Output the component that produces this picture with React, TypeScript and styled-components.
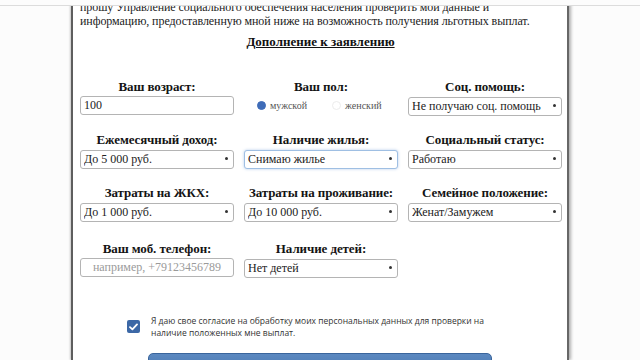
import React from 'react';
import styled, { createGlobalStyle } from 'styled-components';

const GlobalStyle = createGlobalStyle`
  html, body {
    margin: 0;
    padding: 0;
    background: #fcfcfc;
    overflow: hidden;
  }
  body {
    font-family: "Liberation Serif", serif;
  }
`;

const Screen = styled.div`
  position: relative;
  height: 360px;
  overflow: hidden;
`;

const TopBar = styled.div`
  position: absolute;
  top: 0;
  left: 0;
  right: 0;
  height: 5px;
  background: #fcfcfc;
  border-bottom: 1px solid #dcdcdc;
  z-index: 2;
`;

const Sheet = styled.div`
  box-sizing: border-box;
  width: 498px;
  height: 360px;
  margin: 0 auto;
  padding: 0 6px 0 7px;
  background: #fff;
  border-left: 2px solid #5e5e5e;
  border-right: 2px solid #676767;
  box-shadow: 2px 0 3px rgba(0, 0, 0, 0.3), -1px 0 2px rgba(0, 0, 0, 0.2);
  font-family: "Liberation Serif", serif;
`;

const Intro = styled.p`
  margin: 0;
  font-size: 12px;
  line-height: 14px;
  letter-spacing: -0.08px;
  white-space: nowrap;
  color: #222;
`;

const Heading = styled.h2`
  margin: 6px 0 0;
  text-align: center;
  font-size: 13px;
  line-height: 15px;
  font-weight: bold;
  text-decoration: underline;
  color: #111;
`;

const FormGrid = styled.div`
  display: grid;
  grid-template-columns: repeat(3, 154px);
  column-gap: 10px;
  row-gap: 17px;
  margin-top: 30px;
`;

const Field = styled.div<{ $late?: boolean }>`
  display: flex;
  flex-direction: column;
  gap: 2px;
  margin-top: ${({ $late }) => ($late ? '3px' : '0')};
`;

const Label = styled.div`
  text-align: center;
  font-size: 13px;
  line-height: 15px;
  font-weight: bold;
  letter-spacing: -0.1px;
  color: #141414;
`;

const TextInput = styled.input<{ $center?: boolean }>`
  box-sizing: border-box;
  width: 100%;
  height: 19px;
  padding: 0 3px;
  border: 1px solid #b4b4b4;
  border-radius: 3px;
  background: #fff;
  font-family: "Liberation Serif", serif;
  font-size: 12px;
  color: #222;
  text-align: ${({ $center }) => ($center ? 'center' : 'left')};
  outline: none;
  &::placeholder {
    color: #9a9a9a;
  }
`;

const SelectWrap = styled.div`
  position: relative;
  height: 19px;
  &::after {
    content: '';
    position: absolute;
    right: 6px;
    top: 8px;
    width: 3px;
    height: 3px;
    border-radius: 50%;
    background: #333;
    pointer-events: none;
  }
`;

const Select = styled.select<{ $focused?: boolean }>`
  appearance: none;
  box-sizing: border-box;
  width: 100%;
  height: 19px;
  padding: 0 14px 0 3px;
  border: 1px solid ${({ $focused }) => ($focused ? '#9fbfe3' : '#b4b4b4')};
  border-radius: 3px;
  background: #fff;
  box-shadow: ${({ $focused }) =>
    $focused ? '0 0 3px rgba(90, 140, 210, 0.45)' : 'none'};
  font-family: "Liberation Serif", serif;
  font-size: 12px;
  color: #222;
  outline: none;
`;

const RadioRow = styled.div`
  display: flex;
  align-items: center;
  height: 19px;
  padding-left: 13px;
  gap: 25px;
`;

const RadioItem = styled.label`
  display: flex;
  align-items: center;
  gap: 4px;
  font-size: 10px;
  color: #555;
`;

const RadioDot = styled.span<{ $on?: boolean }>`
  box-sizing: border-box;
  width: 9px;
  height: 9px;
  border-radius: 50%;
  background: ${({ $on }) => ($on ? '#3f6cb8' : '#fff')};
  border: 1px solid ${({ $on }) => ($on ? '#3f6cb8' : '#ececec')};
`;

const Consent = styled.div`
  display: flex;
  align-items: flex-start;
  gap: 11px;
  margin-top: 38px;
  padding-left: 47px;
`;

const CheckBox = styled.span`
  flex: none;
  display: flex;
  align-items: center;
  justify-content: center;
  width: 13px;
  height: 13px;
  margin-top: 5px;
  border-radius: 2px;
  background: #3c68a6;
`;

const ConsentText = styled.div`
  width: 340px;
  font-family: "Open Sans", sans-serif;
  font-size: 8.5px;
  line-height: 12px;
  color: #333;
`;

const SubmitButton = styled.button`
  display: block;
  box-sizing: border-box;
  width: 344px;
  height: 32px;
  margin: 14px 0 0 68px;
  border: 1px solid #3a659c;
  border-radius: 5px;
  background: linear-gradient(#5b88c0, #3f6fa8);
`;

const selects = {
  income: ['До 5 000 руб.', 'До 10 000 руб.', 'До 20 000 руб.'],
};

export default function App() {
  return (
    <Screen>
      <GlobalStyle />
      <TopBar />
      <Sheet>
        <Intro>
          прошу Управление социального обеспечения населения проверить мои данные и
          <br />
          информацию, предоставленную мной ниже на возможность получения льготных выплат.
        </Intro>
        <Heading>Дополнение к заявлению</Heading>
        <FormGrid>
          <Field>
            <Label>Ваш возраст:</Label>
            <TextInput defaultValue="100" />
          </Field>
          <Field>
            <Label>Ваш пол:</Label>
            <RadioRow>
              <RadioItem>
                <RadioDot $on />
                мужской
              </RadioItem>
              <RadioItem>
                <RadioDot />
                женский
              </RadioItem>
            </RadioRow>
          </Field>
          <Field>
            <Label>Соц. помощь:</Label>
            <SelectWrap>
              <Select defaultValue="Не получаю соц. помощь">
                <option>Не получаю соц. помощь</option>
                <option>Получаю соц. помощь</option>
              </Select>
            </SelectWrap>
          </Field>

          <Field>
            <Label>Ежемесячный доход:</Label>
            <SelectWrap>
              <Select defaultValue={selects.income[0]}>
                {selects.income.map((o) => (
                  <option key={o}>{o}</option>
                ))}
              </Select>
            </SelectWrap>
          </Field>
          <Field>
            <Label>Наличие жилья:</Label>
            <SelectWrap>
              <Select $focused defaultValue="Снимаю жилье">
                <option>Снимаю жилье</option>
                <option>Собственное жилье</option>
              </Select>
            </SelectWrap>
          </Field>
          <Field>
            <Label>Социальный статус:</Label>
            <SelectWrap>
              <Select defaultValue="Работаю">
                <option>Работаю</option>
                <option>Не работаю</option>
              </Select>
            </SelectWrap>
          </Field>

          <Field>
            <Label>Затраты на ЖКХ:</Label>
            <SelectWrap>
              <Select defaultValue="До 1 000 руб.">
                <option>До 1 000 руб.</option>
                <option>До 5 000 руб.</option>
              </Select>
            </SelectWrap>
          </Field>
          <Field>
            <Label>Затраты на проживание:</Label>
            <SelectWrap>
              <Select defaultValue="До 10 000 руб.">
                <option>До 10 000 руб.</option>
                <option>До 20 000 руб.</option>
              </Select>
            </SelectWrap>
          </Field>
          <Field>
            <Label>Семейное положение:</Label>
            <SelectWrap>
              <Select defaultValue="Женат/Замужем">
                <option>Женат/Замужем</option>
                <option>Холост/Не замужем</option>
              </Select>
            </SelectWrap>
          </Field>

          <Field $late>
            <Label>Ваш моб. телефон:</Label>
            <TextInput $center placeholder="например, +79123456789" />
          </Field>
          <Field $late>
            <Label>Наличие детей:</Label>
            <SelectWrap>
              <Select defaultValue="Нет детей">
                <option>Нет детей</option>
                <option>Есть дети</option>
              </Select>
            </SelectWrap>
          </Field>
        </FormGrid>

        <Consent>
          <CheckBox>
            <svg width="9" height="8" viewBox="0 0 9 8">
              <path
                d="M1 4.2 L3.4 6.4 L8 1.4"
                fill="none"
                stroke="#fff"
                strokeWidth="1.8"
                strokeLinecap="round"
                strokeLinejoin="round"
              />
            </svg>
          </CheckBox>
          <ConsentText>
            Я даю свое согласие на обработку моих персональных данных для проверки на
            наличие положенных мне выплат.
          </ConsentText>
        </Consent>
        <SubmitButton type="button" />
      </Sheet>
    </Screen>
  );
}
